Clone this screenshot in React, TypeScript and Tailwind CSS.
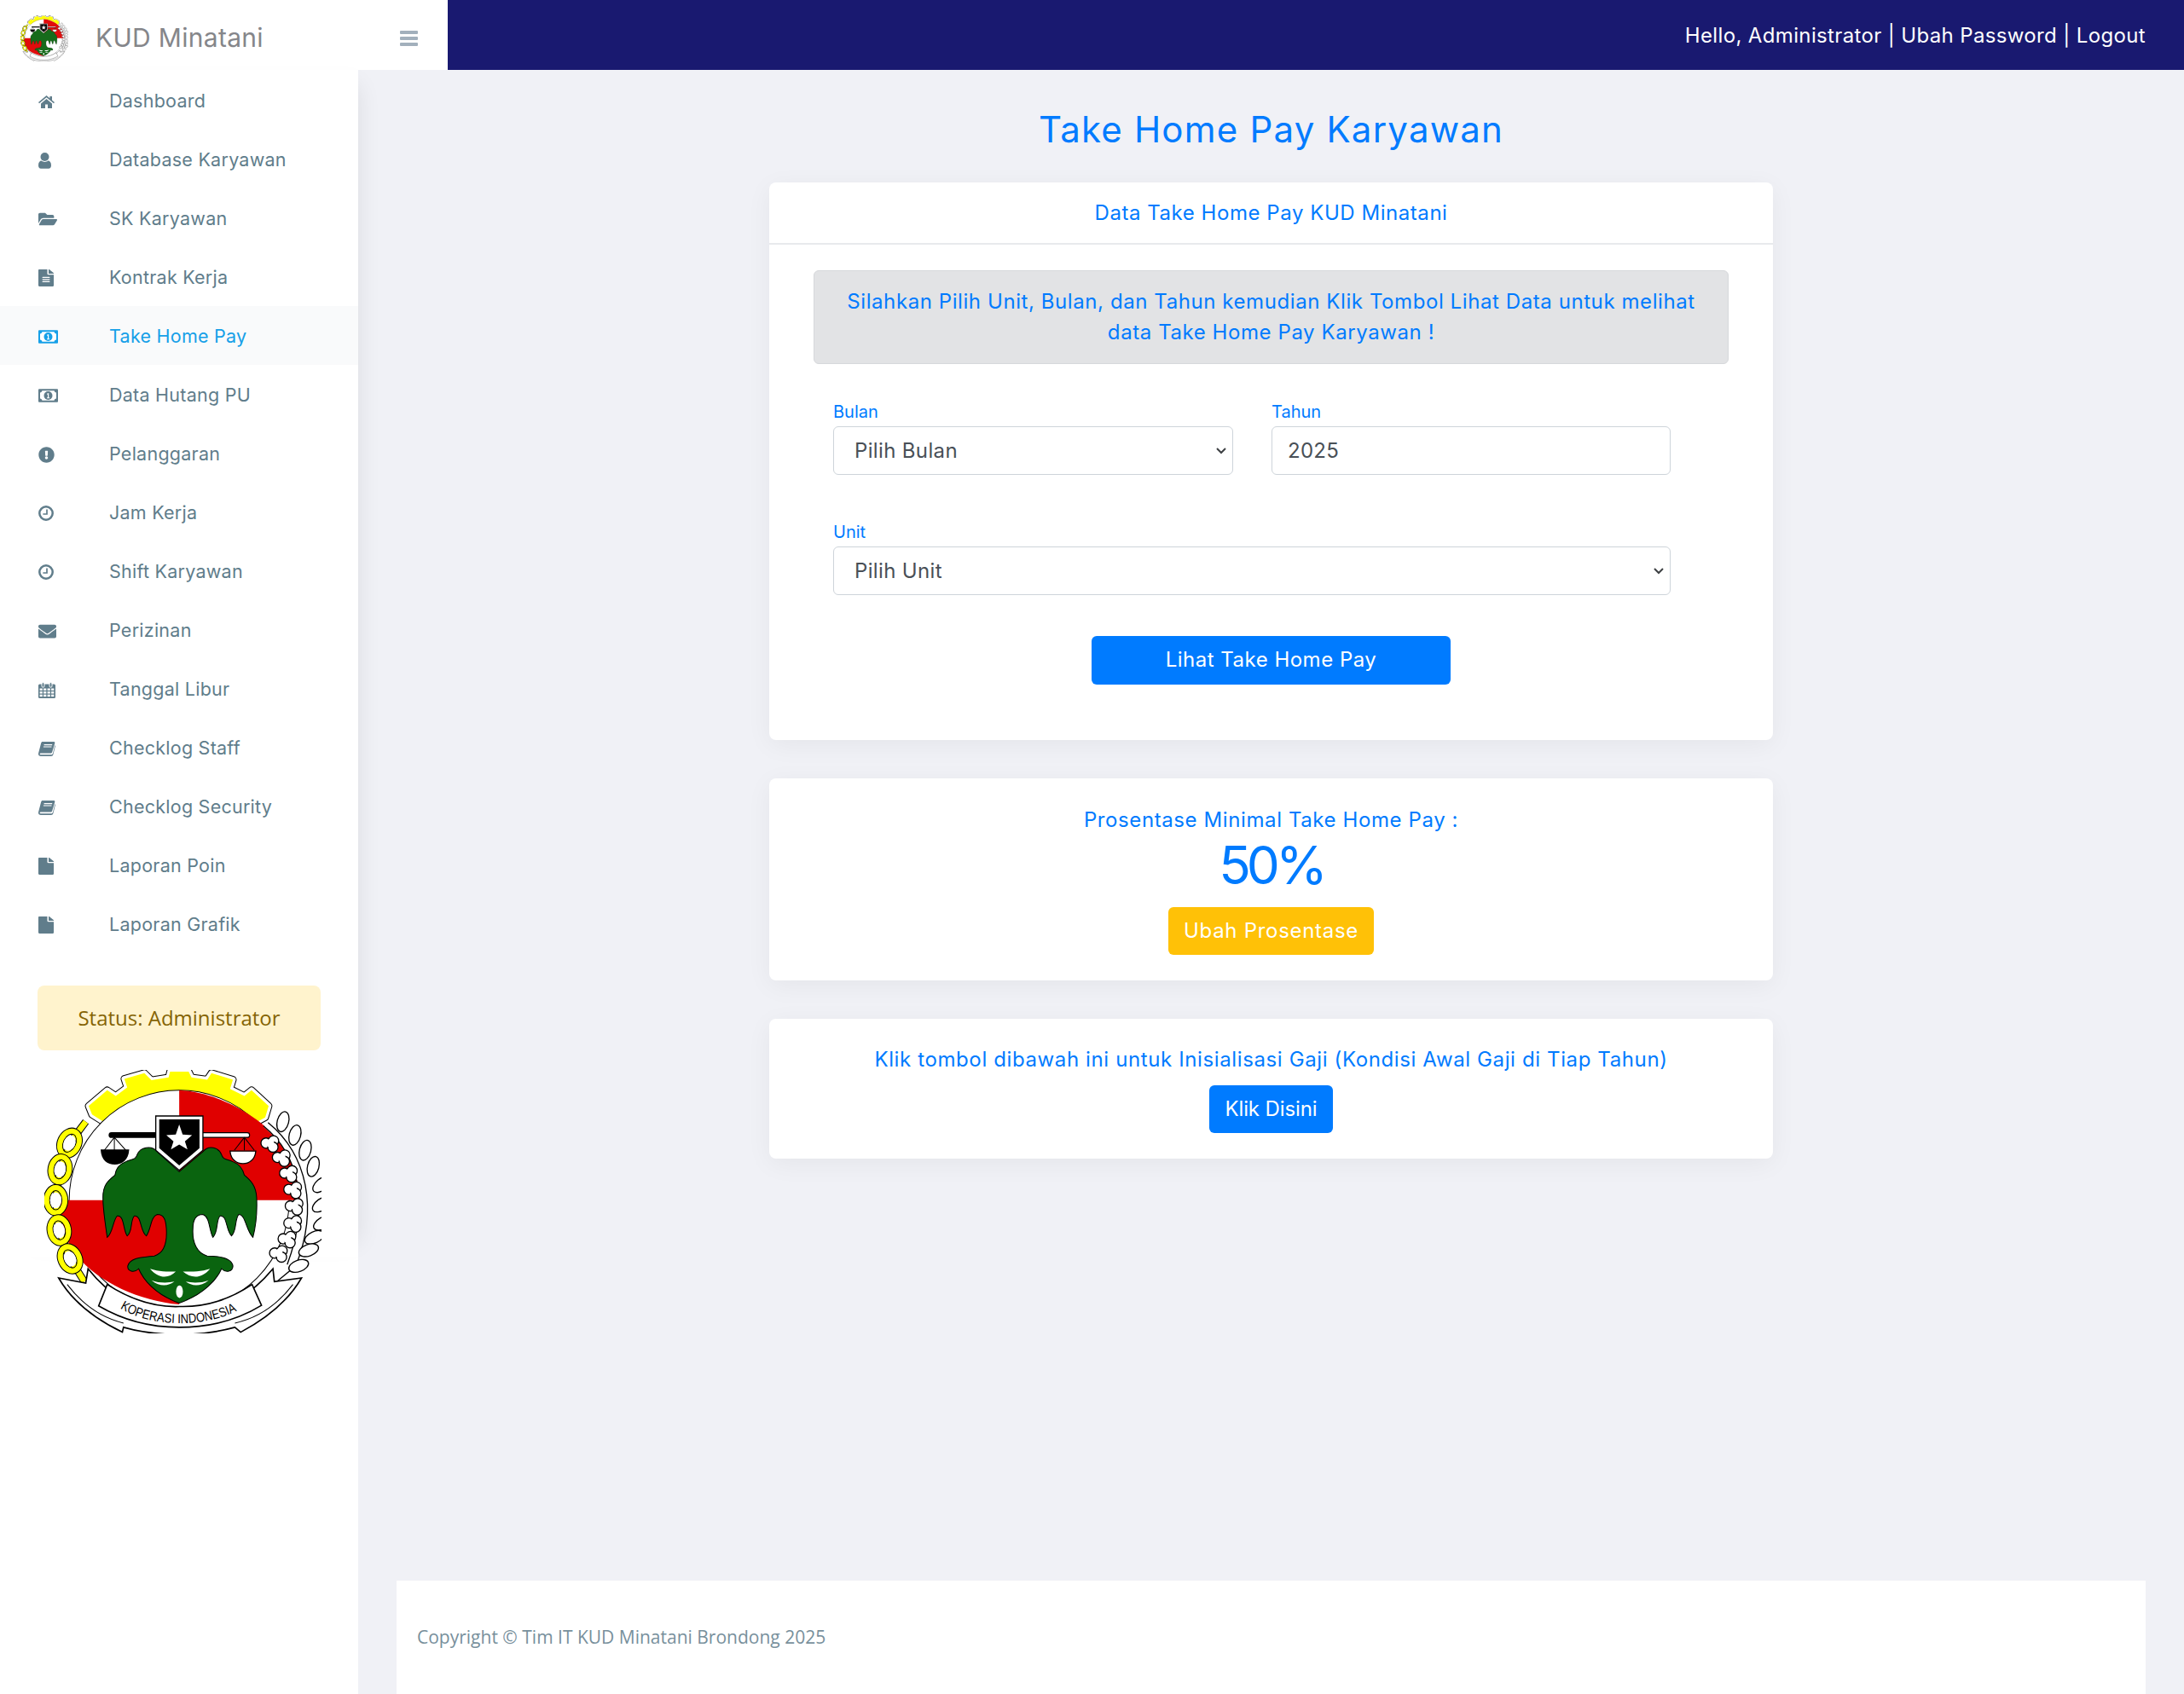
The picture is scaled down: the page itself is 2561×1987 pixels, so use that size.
import React from "react";
import { FaFolderOpen, FaFileAlt, FaExclamationCircle, FaEnvelope, FaFile } from "react-icons/fa";

const HomeIcon = () => (
  <svg width="19" height="15" viewBox="0 0 19 15" fill="currentColor">
    <path d="M9.5 0 L0 8 L1 9.2 L9.5 2.2 L18 9.2 L19 8 L16 5.4 V1 H13.4 V3.2 Z" />
    <path d="M3 9.4 L9.5 3.9 L16 9.4 V15 H11 V10.5 H8 V15 H3 Z" />
  </svg>
);
const UserIcon = () => (
  <svg width="15" height="19" viewBox="0 0 15 19" fill="currentColor">
    <circle cx="7.5" cy="5" r="5" />
    <path d="M0 15 C0 11.5 1.6 9.6 3.8 9.6 C5 10.6 6 11 7.5 11 C9 11 10 10.6 11.2 9.6 C13.4 9.6 15 11.5 15 15 C15 17.4 13.8 18.7 12 18.7 H3 C1.2 18.7 0 17.4 0 15Z" />
  </svg>
);
const MoneyIcon = () => (
  <svg width="23" height="16" viewBox="0 0 23 15.5">
    <rect width="23" height="15.5" rx="1" fill="currentColor" />
    <path d="M4.4 2 H18.6 C18.8 3.3 19.6 4 21 4.2 V11.3 C19.6 11.5 18.8 12.2 18.6 13.5 H4.4 C4.2 12.2 3.4 11.5 2 11.3 V4.2 C3.4 4 4.2 3.3 4.4 2Z" fill="#fff" />
    <circle cx="11.5" cy="7.75" r="5" fill="currentColor" />
    <path d="M10 5.4 L12.2 4.8 V10 H13.2 V11 H10 V10 H11 V6.2 L10 6.4 Z" fill="#fff" />
  </svg>
);
const ClockIcon = () => (
  <svg width="18" height="18" viewBox="0 0 18 18" fill="none" stroke="currentColor">
    <circle cx="9" cy="9" r="7.7" strokeWidth="2.5" />
    <path d="M10 4.6 V10 H5.4" strokeWidth="1.7" />
  </svg>
);
const CalendarIcon = () => {
  const xs = [1.6, 6.1, 10.6, 15.1];
  const ys = [7.5, 11.1, 14.7];
  return (
    <svg width="20" height="19" viewBox="0 0 20 19" fill="currentColor">
      <rect x="0" y="2.5" width="20" height="16.5" rx="1.5" />
      {ys.map((y) => xs.map((x) => <rect key={`${x}-${y}`} x={x} y={y} width="3.2" height="2.4" fill="#fff" />))}
      <rect x="4" y="0.6" width="3" height="5.6" rx="1.5" stroke="#fff" strokeWidth="1" />
      <rect x="13" y="0.6" width="3" height="5.6" rx="1.5" stroke="#fff" strokeWidth="1" />
    </svg>
  );
};
const BookIcon = () => (
  <svg width="20" height="17" viewBox="0 0 20 17" fill="currentColor">
    <path d="M5 0 H17.8 C19 0 19.6 .7 19.3 1.7 L16.2 12 C15.9 13 15.2 13.5 14.2 13.5 H2.8 C1.2 13.5 1.2 15.2 2.8 15.2 H15 C16 15.2 16.8 14.6 17 13.7 L19.4 4.2 L20 4.8 L17.4 15 C17.1 16.2 16.2 17 15 17 H3 C1 17 0 16 0 14.5 C0 14 0 13.8 .2 13 L3.2 1.6 C3.5 .6 4 0 5 0Z" />
    <path d="M6.6 3.6 H16.2 M5.9 6 H15.5" stroke="#fff" strokeWidth="1.2" />
  </svg>
);
const Chevron = () => (
  <svg width="12" height="8" viewBox="0 0 12 8" fill="none" stroke="#3d4043" strokeWidth="2" className="absolute right-[8px] top-[25px] pointer-events-none">
    <path d="M1 1 L6 6 L11 1" />
  </svg>
);

const menu: [string, React.ReactNode][] = [
  ["Dashboard", <HomeIcon />],
  ["Database Karyawan", <UserIcon />],
  ["SK Karyawan", <FaFolderOpen size={22} />],
  ["Kontrak Kerja", <FaFileAlt className="w-[18px] h-[20px]" preserveAspectRatio="none" />],
  ["Take Home Pay", <MoneyIcon />],
  ["Data Hutang PU", <MoneyIcon />],
  ["Pelanggaran", <FaExclamationCircle size={19} />],
  ["Jam Kerja", <ClockIcon />],
  ["Shift Karyawan", <ClockIcon />],
  ["Perizinan", <FaEnvelope size={21} />],
  ["Tanggal Libur", <CalendarIcon />],
  ["Checklog Staff", <BookIcon />],
  ["Checklog Security", <BookIcon />],
  ["Laporan Poin", <FaFile className="w-[18px] h-[20px]" preserveAspectRatio="none" />],
  ["Laporan Grafik", <FaFile className="w-[18px] h-[20px]" preserveAspectRatio="none" />],
];

const leaves: [number, number, number][] = [
  [930, 525, 15], [972, 572, 15], [1008, 625, 15], [1036, 682, 15],
  [1065, 745, 50], [1065, 815, 55], [1070, 880, 60], [1040, 930, 65], [1020, 975, 70], [985, 1030, 70],
];
const cotton: [number, number][] = [
  [885, 600], [925, 650], [950, 705], [965, 762], [970, 820], [965, 880], [945, 935], [915, 985],
];
const links: [number, number, number][] = [
  [183, 600, 25], [150, 692, 10], [135, 800, 0], [147, 905, -10], [185, 1005, -25],
];
const gear = "M262 500 L250 470 L315 415 L345 435 L385 405 L375 375 L445 355 L470 380 L530 370 L535 350 L600 350 L610 370 L665 378 L680 355 L755 378 L745 410 L795 435 L820 415 L880 470 L868 510 L700 600 L420 600 Z";

const Logo = ({ id, className, showText = true }: { id: string; className: string; showText?: boolean }) => (
  <svg viewBox="95 345 970 920" className={className}>
    {/* gear */}
    <path d={gear} fill="#ffff00" stroke="#000" strokeWidth="26" strokeLinejoin="round" />
    <path d={gear} fill="#ffff00" stroke="#fff" strokeWidth="20" strokeLinejoin="round" />
    <path d={gear} fill="#ffff00" />
    {/* disc */}
    <circle cx="567" cy="800" r="385" fill="#fff" stroke="#000" strokeWidth="3" />
    <path d="M567 415 C760 425 1000 590 1005 800 H567 Z" fill="#e00000" />
    <path d="M150 800 H567 V1165 C400 1150 230 1060 175 940 C160 900 150 850 150 800 Z" fill="#e00000" />
    {/* scales */}
    <path d="M330 572 H490" stroke="#000" strokeWidth="20" strokeLinecap="round" />
    <path d="M650 572 H805" stroke="#000" strokeWidth="20" strokeLinecap="round" />
    <path d="M650 572 H805" stroke="#fff" strokeWidth="13" strokeLinecap="round" />
    <path d="M340 580 L305 625 M340 580 L380 625 M340 580 V625" stroke="#000" strokeWidth="3" />
    <path d="M292 622 H392 C390 660 365 675 342 675 C315 675 294 660 292 622Z" fill="#000" />
    <path d="M795 580 L760 625 M795 580 L830 625 M795 580 V625" stroke="#000" strokeWidth="3" />
    <path d="M745 628 H835 C832 660 810 672 790 672 C770 672 748 660 745 628Z" fill="#fff" stroke="#000" strokeWidth="4" />
    {/* tree */}
    <path
      d="M567 700 L490 630 C470 605 430 615 420 640 C415 660 400 655 380 665 C355 675 345 690 342 712 C320 730 300 745 300 790 C300 830 305 860 315 930 C335 915 335 870 350 855 C375 850 370 905 385 925 C405 910 395 870 410 855 C435 850 430 910 452 925 C470 900 465 860 490 850 C515 850 520 870 522 900 C525 950 515 985 480 995 C440 1000 395 1000 387 1030 C385 1050 410 1055 425 1040 C440 1075 480 1130 567 1160 C655 1130 700 1075 715 1040 C730 1055 755 1050 755 1030 C750 1000 700 995 665 995 C630 985 612 950 615 900 C615 870 625 850 650 850 C675 860 670 900 685 930 C705 910 695 870 710 855 C735 850 730 905 750 925 C770 905 760 870 775 850 C800 850 800 905 825 930 C838 880 840 830 838 790 C835 745 815 730 795 712 C790 690 780 675 755 665 C735 655 720 660 715 640 C705 615 670 605 650 630 Z"
      fill="#0a640f" stroke="#000" strokeWidth="3"
    />
    <path d="M465 1040 C495 1075 530 1075 555 1050 C525 1050 495 1050 465 1040Z M580 1050 C610 1075 645 1075 675 1040 C645 1050 615 1050 580 1050Z" fill="#fff" />
    <path d="M470 1080 C500 1105 530 1100 550 1085 C525 1090 495 1090 470 1080Z M590 1085 C610 1100 640 1105 670 1080 C645 1090 615 1090 590 1085Z" fill="#fff" />
    <ellipse cx="568" cy="1120" rx="12" ry="22" fill="#fff" />
    {/* shield */}
    <path d="M485 505 H650 V625 L567 695 L485 625 Z" fill="#fff" stroke="#000" strokeWidth="4" />
    <path d="M497 517 H638 V618 L567 678 L497 618 Z" fill="#000" />
    <path d="M567 535 L579 570 L612 572 L587 594 L596 622 L567 605 L538 622 L547 594 L522 572 L555 570 Z" fill="#fff" />
    {/* chain */}
    <path d="M240 525 L195 585 L150 690 L135 800 L147 905 L185 1005 L235 1085" fill="none" stroke="#000" strokeWidth="26" />
    <path d="M240 525 L195 585 L150 690 L135 800 L147 905 L185 1005 L235 1085" fill="none" stroke="#ffff00" strokeWidth="20" />
    {links.map(([x, y, r]) => (
      <g key={`${x}-${y}`} transform={`rotate(${r} ${x} ${y})`}>
        <ellipse cx={x} cy={y} rx="32" ry="44" fill="none" stroke="#000" strokeWidth="24" />
        <ellipse cx={x} cy={y} rx="32" ry="44" fill="none" stroke="#ffff00" strokeWidth="18" />
        <ellipse cx={x} cy={y} rx="20" ry="28" fill="#fff" />
      </g>
    ))}
    {/* rice */}
    <path d="M870 535 C1000 640 1040 820 960 1030 L900 1080" fill="none" stroke="#fff" strokeWidth="22" />
    <path d="M878 528 C1015 640 1055 830 975 1030 L905 1088 M862 540 C985 640 1025 810 945 1025" fill="none" stroke="#000" strokeWidth="4" />
    {leaves.map(([x, y, r]) => (
      <ellipse key={`${x}-${y}`} cx={x} cy={y} rx="20" ry="36" transform={`rotate(${r} ${x} ${y})`} fill="#fff" stroke="#000" strokeWidth="4" />
    ))}
    {cotton.map(([x, y]) => (
      <g key={`${x}-${y}`} fill="#fff" stroke="#000" strokeWidth="4">
        <circle cx={x - 14} cy={y} r="18" />
        <circle cx={x + 12} cy={y - 8} r="18" />
        <circle cx={x + 10} cy={y + 14} r="18" />
        <circle cx={x} cy={y} r="14" stroke="none" />
      </g>
    ))}
    {/* ribbon */}
    <path d="M145 1072 L240 1090 L248 1040 C320 1130 420 1200 567 1225 C720 1200 820 1130 895 1040 L900 1085 L995 1072 C950 1150 880 1210 782 1262 L762 1245 C700 1262 640 1270 567 1270 C500 1270 430 1262 372 1245 L368 1262 C260 1210 190 1150 145 1072 Z" fill="#fff" stroke="#000" strokeWidth="5" />
    <path d="M175 1095 C240 1180 310 1215 372 1230 M965 1095 C900 1180 830 1215 762 1230" fill="none" stroke="#000" strokeWidth="3" />
    <path d="M315 1095 C400 1150 480 1175 567 1172 C660 1175 740 1150 822 1095 L855 1168 C770 1220 670 1245 567 1245 C470 1245 370 1220 285 1170 Z" fill="#fff" stroke="#000" strokeWidth="5" />
    {showText && (
      <>
        <path id={`${id}-t`} d="M360 1178 C470 1248 670 1248 785 1178" fill="none" />
        <text fontFamily="'Liberation Sans', sans-serif" fontSize="46" fill="#000">
          <textPath href={`#${id}-t`} textLength="425" lengthAdjust="spacingAndGlyphs">KOPERASI INDONESIA</textPath>
        </text>
      </>
    )}
  </svg>
);

export default function App() {
  return (
    <div className="h-screen flex flex-col overflow-hidden bg-[#f0f1f6] font-['Inter','Noto_Sans',sans-serif]">
      {/* top bar */}
      <header className="flex h-[82px] shrink-0">
        <div className="w-[525px] bg-white flex items-center pl-[24px]">
          <Logo id="small" showText={false} className="w-[56px] h-[54px] mt-[8px] shrink-0 opacity-95" />
          <span className="ml-[32px] w-[357px] text-[30px] text-[#85868a] mt-[7px] tracking-[0.3px]">KUD Minatani</span>
          <span className="flex flex-col gap-[3.5px] mt-[8px]">
            <span className="block w-[21px] h-[3.5px] rounded-[1px] bg-[#a2b0bc]" />
            <span className="block w-[21px] h-[3.5px] rounded-[1px] bg-[#a2b0bc]" />
            <span className="block w-[21px] h-[3.5px] rounded-[1px] bg-[#a2b0bc]" />
          </span>
        </div>
        <div className="flex-1 bg-[#191970] flex items-center justify-end pr-[45px] pt-[2px] text-white text-[24px] tracking-[0.36px]">
          Hello, Administrator | Ubah Password | Logout
        </div>
      </header>

      <div className="flex flex-1 min-h-0">
        {/* sidebar */}
        <aside className="relative z-10 w-[420px] shrink-0 bg-white">
          <div className="h-[1393px] shadow-[18px_0_26px_-18px_rgba(0,0,0,0.09)] pt-[1px]">
            <nav className="flex flex-col">
              {menu.map(([label, icon], i) => (
                <a
                  key={label}
                  className={
                    i === 4
                      ? "flex items-center h-[69px] pl-[45px] bg-[#f9fafb] text-[#16a0e8] text-[21.5px] tracking-[0.25px]"
                      : "flex items-center h-[69px] pl-[45px] text-[#607d8b] text-[21.5px] tracking-[0.25px]"
                  }
                >
                  <span className="w-[83px] flex items-center mt-[3px]">{icon}</span>
                  <span className="mt-[1px]">{label}</span>
                </a>
              ))}
            </nav>
            <div className="mx-[44px] mt-[38px] h-[76px] rounded-[8px] bg-[#fff3cd] text-[#856404] flex items-center justify-center text-[24px] font-['Open_Sans',sans-serif]">
              Status: Administrator
            </div>
            <Logo id="big" className="block w-[325px] h-[309px] ml-[52px] mt-[23px]" />
          </div>
        </aside>

        {/* main */}
        <main className="flex-1 min-w-0 flex flex-col items-center">
          <h1 className="mt-[39px] h-[62px] leading-[62px] text-[42px] text-[#007bff] tracking-[1.2px]">Take Home Pay Karyawan</h1>
          <section className="mt-[31px] w-[1177px] h-[654px] rounded-[8px] bg-white shadow-[0_6px_30px_rgba(0,0,0,0.05)]">
            <div className="h-[73px] border-b-2 border-[#e8eaed] flex items-center justify-center text-[24px] text-[#007bff] tracking-[0.55px]">
              Data Take Home Pay KUD Minatani
            </div>
            <div className="px-[52px] pt-[30px]">
              <div className="h-[110px] rounded-[6px] bg-[#e2e3e5] border border-[#d6d8db] flex items-center justify-center text-center text-[24px] leading-[36px] text-[#007bff] px-[30px] tracking-[0.58px]">
                Silahkan Pilih Unit, Bulan, dan Tahun kemudian Klik Tombol Lihat Data untuk melihat data Take Home Pay Karyawan !
              </div>
              <div className="ml-[23px] w-[982px] mt-[43px]">
                <div className="grid grid-cols-[469px_468px] gap-x-[45px]">
                  <label className="flex flex-col">
                    <span className="h-[30px] leading-[26px] text-[20px] text-[#007bff]">Bulan</span>
                    <span className="relative block">
                      <select className="w-full h-[57px] appearance-none rounded-[6px] border border-[#ced4da] bg-white px-[24px] text-[24px] text-[#495057] tracking-[0.35px]">
                        <option>Pilih Bulan</option>
                      </select>
                      <Chevron />
                    </span>
                  </label>
                  <label className="flex flex-col">
                    <span className="h-[30px] leading-[26px] text-[20px] text-[#007bff]">Tahun</span>
                    <input readOnly value="2025" className="h-[57px] rounded-[6px] border border-[#ced4da] bg-white px-[18px] text-[24px] text-[#495057] tracking-[0.25px]" />
                  </label>
                </div>
                <label className="flex flex-col mt-[54px]">
                  <span className="h-[30px] leading-[26px] text-[20px] text-[#007bff]">Unit</span>
                  <span className="relative block">
                    <select className="w-full h-[57px] appearance-none rounded-[6px] border border-[#ced4da] bg-white px-[24px] text-[24px] text-[#495057] tracking-[0.35px]">
                      <option>Pilih Unit</option>
                    </select>
                    <Chevron />
                  </span>
                </label>
              </div>
              <div className="flex justify-center mt-[48px]">
                <button className="w-[421px] h-[57px] pb-[2px] rounded-[6px] bg-[#007bff] text-white text-[24px] tracking-[0.5px]">Lihat Take Home Pay</button>
              </div>
            </div>
          </section>
          <section className="mt-[45px] w-[1177px] h-[237px] rounded-[8px] bg-white shadow-[0_6px_30px_rgba(0,0,0,0.05)] flex flex-col items-center pt-[31px]">
            <div className="h-[36px] leading-[36px] text-[24px] text-[#007bff] tracking-[0.6px]">Prosentase Minimal Take Home Pay :</div>
            <div className="h-[72px] leading-[70px] text-[62px] text-[#007bff] tracking-[-5px]">50%</div>
            <button className="mt-[12px] w-[241px] h-[56px] rounded-[6px] bg-[#ffc107] text-white text-[24px] tracking-[0.7px]">Ubah Prosentase</button>
          </section>
          <section className="mt-[45px] w-[1177px] h-[164px] rounded-[8px] bg-white shadow-[0_6px_30px_rgba(0,0,0,0.05)] flex flex-col items-center pt-[30px]">
            <div className="h-[36px] leading-[36px] text-[24px] text-[#007bff] tracking-[0.62px]">Klik tombol dibawah ini untuk Inisialisasi Gaji (Kondisi Awal Gaji di Tiap Tahun)</div>
            <button className="mt-[12px] w-[145px] h-[56px] rounded-[6px] bg-[#007bff] text-white text-[24px] tracking-[-0.1px]">Klik Disini</button>
          </section>
          <footer className="mt-auto self-stretch ml-[45px] mr-[45px] h-[133px] bg-white flex items-center pl-[24px] text-[21px] text-[#78909c] font-['Open_Sans',sans-serif]">
            Copyright © Tim IT KUD Minatani Brondong 2025
          </footer>
        </main>
      </div>
    </div>
  );
}
